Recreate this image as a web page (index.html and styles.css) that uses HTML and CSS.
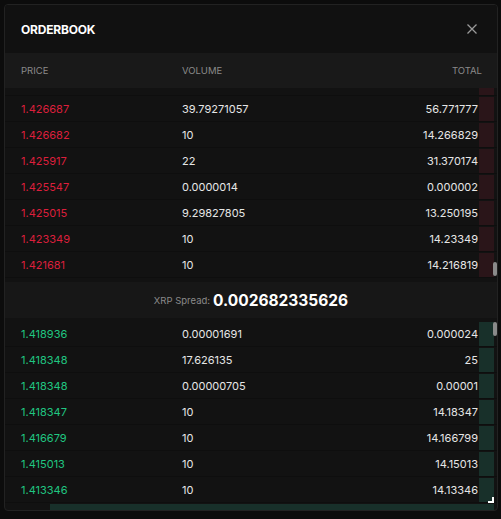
FILE: index.html
```html
<!DOCTYPE html>
<html>
<head>
<meta charset="utf-8">
<link rel="stylesheet" href="styles.css">
</head>
<body>
<div class="panel">
  <div class="head">
    <div class="title">ORDERBOOK</div>
    <svg class="close" width="12" height="12" viewBox="0 0 12 12"><path d="M1.5 1.5L10.5 10.5M10.5 1.5L1.5 10.5" stroke="#9a9a9a" stroke-width="1.3" fill="none"/></svg>
  </div>
  <div class="cols">
    <span>PRICE</span><span>VOLUME</span><span class="r">TOTAL</span>
  </div>
  <div class="section sell">
    <div class="row"><span class="bar" style="width:15px"></span></div>
    <div class="row"><span class="bar" style="width:15px"></span><span class="p">1.426687</span><span class="v">39.79271057</span><span class="t">56.771777</span></div>
    <div class="row"><span class="bar" style="width:15px"></span><span class="p">1.426682</span><span class="v">10</span><span class="t">14.266829</span></div>
    <div class="row"><span class="bar" style="width:15px"></span><span class="p">1.425917</span><span class="v">22</span><span class="t">31.370174</span></div>
    <div class="row"><span class="bar" style="width:15px"></span><span class="p">1.425547</span><span class="v">0.0000014</span><span class="t">0.000002</span></div>
    <div class="row"><span class="bar" style="width:15px"></span><span class="p">1.425015</span><span class="v">9.29827805</span><span class="t">13.250195</span></div>
    <div class="row"><span class="bar" style="width:15px"></span><span class="p">1.423349</span><span class="v">10</span><span class="t">14.23349</span></div>
    <div class="row"><span class="bar" style="width:15px"></span><span class="p">1.421681</span><span class="v">10</span><span class="t">14.216819</span></div>
    <span class="thumb sell-thumb"></span>
  </div>
  <div class="spread">
    <span class="lbl">XRP Spread:</span><span class="val">0.002682335626</span>
  </div>
  <div class="section buy">
    <div class="row"><span class="bar" style="width:15px"></span><span class="p">1.418936</span><span class="v">0.00001691</span><span class="t">0.000024</span></div>
    <div class="row"><span class="bar" style="width:15px"></span><span class="p">1.418348</span><span class="v">17.626135</span><span class="t">25</span></div>
    <div class="row"><span class="bar" style="width:15px"></span><span class="p">1.418348</span><span class="v">0.00000705</span><span class="t">0.00001</span></div>
    <div class="row"><span class="bar" style="width:15px"></span><span class="p">1.418347</span><span class="v">10</span><span class="t">14.18347</span></div>
    <div class="row"><span class="bar" style="width:15px"></span><span class="p">1.416679</span><span class="v">10</span><span class="t">14.166799</span></div>
    <div class="row"><span class="bar" style="width:15px"></span><span class="p">1.415013</span><span class="v">10</span><span class="t">14.15013</span></div>
    <div class="row"><span class="bar" style="width:15px"></span><span class="p">1.413346</span><span class="v">10</span><span class="t">14.13346</span></div>
    <div class="row"><span class="bar" style="width:444px"></span></div>
    <span class="thumb buy-thumb"></span>
  </div>
  <span class="resize"></span>
</div>
</body>
</html>
```
FILE: styles.css
```css
* { box-sizing: border-box; }
html, body { margin: 0; padding: 0; }
body {
  background: #0c0c0c;
  font-family: Inter, "Noto Sans", sans-serif;
  width: 501px;
  height: 519px;
  overflow: hidden;
}
.panel {
  position: relative;
  margin: 4px 0 0 4px;
  width: 494px;
  height: 507px;
  border: 1px solid #222222;
  border-radius: 4px;
  background: #121212;
  display: flex;
  flex-direction: column;
  overflow: hidden;
}
.head {
  height: 48px;
  flex: none;
  display: flex;
  align-items: center;
  justify-content: space-between;
  padding: 0 19px 0 16px;
  background: #111111;
}
.title {
  color: #ffffff;
  font-size: 12px;
  font-weight: 700;
  letter-spacing: -0.2px;
}
.close { display: block; }
.cols {
  height: 35px;
  flex: none;
  display: grid;
  grid-template-columns: 161px 1fr auto;
  align-items: center;
  padding: 0 15px 0 16px;
  background: #191919;
  color: #8a8a8a;
  font-size: 9.5px;
}
.cols .r { text-align: right; }
.section {
  position: relative;
  display: flex;
  flex-direction: column;
  overflow: hidden;
  flex: none;
}
.sell {
  height: 194px;
  justify-content: flex-end;
  padding-bottom: 4px;
}
.buy {
  height: 192px;
  justify-content: flex-start;
  padding-top: 3px;
}
.row {
  position: relative;
  flex: none;
  height: 26px;
  display: grid;
  grid-template-columns: 161px 1fr auto;
  align-items: center;
  padding: 0 19px 0 16px;
  border-bottom: 1px solid #0e0e0e;
  font-size: 11px;
  color: #e6e6e6;
}
.row span { position: relative; }
.row .bar {
  position: absolute;
  right: 3px;
  top: 1px;
  height: 24px;
}
.sell .bar { background: #2a1519; }
.buy .bar { background: #18302a; }
.sell .p { color: #dc1f3c; }
.buy .p { color: #20c681; }
.t { text-align: right; }
.thumb {
  position: absolute;
  right: 0;
  width: 4px;
  height: 14px;
  border-radius: 2px;
  background: #8a8a8a;
}
.sell-thumb { bottom: 6px; }
.buy-thumb { top: 4px; }
.spread {
  height: 36px;
  flex: none;
  display: flex;
  align-items: center;
  justify-content: center;
  gap: 3px;
  background: #171717;
}
.spread .lbl { color: #8a8a8a; font-size: 9.5px; }
.spread .val { color: #ffffff; font-size: 15.5px; font-weight: 700; }
.resize {
  position: absolute;
  right: 3px;
  bottom: 7px;
  width: 6px;
  height: 6px;
  border-right: 2px solid #ffffff;
  border-bottom: 2px solid #ffffff;
}
```
